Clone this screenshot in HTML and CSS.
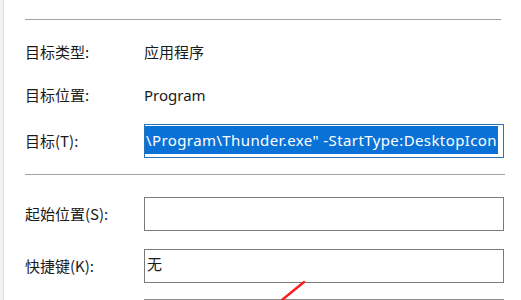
FILE: index.html
```html
<!DOCTYPE html>
<html lang="zh-CN">
<head>
<meta charset="utf-8">
<title>属性</title>
<link rel="stylesheet" href="styles.css">
</head>
<body>
<div class="page">
  <div class="edge"></div>
  <div class="panel">
    <div class="sep sep-top"></div>
    <div class="row row-1">
      <div class="label">目标类型:</div>
      <div class="value">应用程序</div>
    </div>
    <div class="row row-2">
      <div class="label">目标位置:</div>
      <div class="value latin">Program</div>
    </div>
    <div class="row row-box row-3">
      <div class="label">目标(T):</div>
      <div class="box box-focus">
        <span class="sel">\Program\Thunder.exe" -StartType:DesktopIcon</span>
      </div>
    </div>
    <div class="sep sep-mid"></div>
    <div class="row row-box row-4">
      <div class="label">起始位置(S):</div>
      <div class="box"></div>
    </div>
    <div class="row row-box row-5">
      <div class="label">快捷键(K):</div>
      <div class="box"><span class="boxtext">无</span></div>
    </div>
    <div class="row row-cut">
      <div class="label"></div>
      <div class="box-top"></div>
    </div>
  </div>
  <svg class="mark" width="40" height="30" viewBox="0 0 40 30">
    <line x1="34" y1="2" x2="12" y2="20" stroke="#ff1c1c" stroke-width="2.4" stroke-linecap="round"/>
  </svg>
</div>
</body>
</html>
```
FILE: styles.css
```css
html, body {
  margin: 0;
  padding: 0;
  background: #ffffff;
  overflow: hidden;
}
.page {
  position: relative;
  width: 521px;
  height: 300px;
  overflow: hidden;
  display: flex;
  font-family: "Noto Sans", "Noto Sans CJK SC", sans-serif;
  font-size: 15px;
  color: #1a1a1a;
}
.edge {
  width: 3px;
  flex: none;
  background: #f2f2f2;
  border-right: 1px solid #dedede;
}
.panel {
  padding-left: 21px;
  width: 480px;
  display: flex;
  flex-direction: column;
}
.sep {
  height: 1px;
  background: #a0a0a0;
  flex: none;
}
.sep-top {
  margin-top: 19px;
  margin-right: 4px;
}
.sep-mid {
  margin-top: 16px;
}
.row {
  display: grid;
  grid-template-columns: 119px 360px;
  align-items: center;
  height: 22px;
  flex: none;
}
.row-box {
  height: 34px;
}
.row-cut {
  height: 1px;
  margin-top: 16px;
}
.row-1 { margin-top: 21px; }
.row-2 { margin-top: 21px; }
.row-3 { margin-top: 18px; }
.row-4 { margin-top: 22px; }
.row-5 { margin-top: 18px; }
.label {
  font-family: "Noto Sans CJK SC", sans-serif;
  white-space: nowrap;
  line-height: 22px;
}
.value {
  font-family: "Noto Sans CJK SC", sans-serif;
  line-height: 22px;
}
.value.latin {
  font-family: "Noto Sans", sans-serif;
  font-size: 15px;
}
.box {
  box-sizing: border-box;
  height: 34px;
  border: 1px solid #7a7a7a;
  background: #ffffff;
  display: flex;
  align-items: center;
  overflow: hidden;
}
.box-top {
  height: 1px;
  background: #8a8a8a;
}
.box-focus {
  border-color: #2b73b8;
  justify-content: flex-start;
  align-items: flex-start;
}
.sel {
  margin-top: 1px;
  height: 28px;
  line-height: 28px;
  padding: 0 1px 0 1px;
  background: #0a72d6;
  color: #ffffff;
  white-space: nowrap;
  font-family: "Noto Sans", sans-serif;
  font-size: 15px;
  letter-spacing: 0.4px;
}
.boxtext {
  font-family: "Noto Sans CJK SC", sans-serif;
  padding-left: 2px;
  margin-top: -6px;
}
.mark {
  position: absolute;
  left: 270px;
  top: 280px;
}
```
